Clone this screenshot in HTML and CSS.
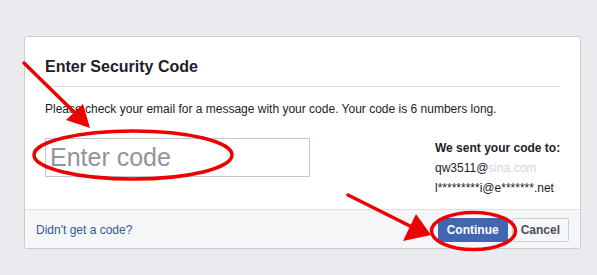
FILE: index.html
```html
<!DOCTYPE html>
<html lang="en">
<head>
<meta charset="utf-8">
<title>Enter Security Code</title>
<link rel="stylesheet" href="styles.css">
</head>
<body>
<div class="card">
  <div class="card-header">
    <h2 class="title">Enter Security Code</h2>
  </div>
  <div class="card-body">
    <p class="intro">Please check your email for a message with your code. Your code is 6 numbers long.</p>
    <div class="code-row">
      <input class="code-input" type="text" placeholder="Enter code">
      <div class="sent-to">
        <div class="sent-label">We sent your code to:</div>
        <div class="sent-line">qw3511@<span class="blurred">sina.com</span></div>
        <div class="sent-line">l*********i@e*******.net</div>
      </div>
    </div>
  </div>
  <div class="card-footer">
    <a class="footer-link" href="#">Didn't get a code?</a>
    <div class="actions">
      <button class="btn btn-primary" type="button">Continue</button>
      <button class="btn btn-secondary" type="button">Cancel</button>
    </div>
  </div>
</div>
<svg class="annotations" width="597" height="275" viewBox="0 0 597 275" aria-hidden="true">
  <g fill="none" stroke="#ee0000" stroke-width="3.5">
    <ellipse cx="133" cy="155" rx="99" ry="24"/>
    <ellipse cx="473.5" cy="231" rx="42" ry="18.5"/>
  </g>
  <g stroke="#ee0000" stroke-width="3.5" stroke-linecap="round">
    <line x1="24" y1="63" x2="76" y2="114"/>
    <line x1="348" y1="195" x2="410" y2="226"/>
  </g>
  <g fill="#ee0000">
    <polygon points="90,128 66,120 83,104"/>
    <polygon points="431,235 403,241 416,214"/>
  </g>
</svg>
</body>
</html>
```

FILE: styles.css
```css
html, body {
  margin: 0;
  padding: 0;
}

body {
  background: #e9ebee;
  font-family: "Liberation Sans", Arial, sans-serif;
  font-size: 12px;
  color: #1d2129;
  width: 597px;
  height: 275px;
  overflow: hidden;
}

.card {
  box-sizing: border-box;
  width: 557px;
  margin: 36px 0 0 24px;
  background: #ffffff;
  border: 1px solid #cccccc;
  border-radius: 3px;
  overflow: hidden;
}

.card-header {
  margin: 0 20px;
  padding: 20px 0 9px;
  border-bottom: 1px solid #dddfe2;
}

.title {
  margin: 0;
  font-size: 16px;
  line-height: 20px;
  font-weight: bold;
  color: #1d2129;
}

.card-body {
  padding: 14px 20px 11px;
}

.intro {
  margin: 0;
  line-height: 16px;
  white-space: nowrap;
}

.code-row {
  display: flex;
  align-items: flex-start;
  margin-top: 21px;
}

.code-input {
  box-sizing: border-box;
  flex: 0 0 265px;
  width: 265px;
  height: 39px;
  margin: 0;
  padding: 0 4px;
  border: 1px solid #bdc7d8;
  border-radius: 0;
  font-family: "Liberation Sans", Arial, sans-serif;
  font-size: 25px;
  color: #1d2129;
  outline: none;
}

.code-input::placeholder {
  color: #90949c;
  opacity: 1;
}

.sent-to {
  flex: 0 0 auto;
  margin-left: 125px;
  line-height: 20px;
  white-space: nowrap;
}

.sent-label {
  font-weight: bold;
}

.blurred {
  color: #d4d6da;
}

.card-footer {
  display: flex;
  align-items: center;
  justify-content: space-between;
  padding: 8px 11px 6px;
  background: #f5f6f7;
  border-top: 1px solid #dddfe2;
}

.footer-link {
  color: #365899;
  text-decoration: none;
  line-height: 16px;
}

.actions {
  display: flex;
  gap: 4px;
}

.btn {
  box-sizing: border-box;
  height: 24px;
  margin: 0;
  padding: 0 8px;
  border-radius: 2px;
  font-family: "Liberation Sans", Arial, sans-serif;
  font-size: 12px;
  font-weight: bold;
  line-height: 22px;
  cursor: pointer;
}

.btn-primary {
  background: #4267b2;
  border: 1px solid #4267b2;
  color: #ffffff;
}

.btn-secondary {
  background: #f6f7f9;
  border: 1px solid #ced0d4;
  color: #4b4f56;
}

.annotations {
  position: absolute;
  left: 0;
  top: 0;
  pointer-events: none;
}
```
